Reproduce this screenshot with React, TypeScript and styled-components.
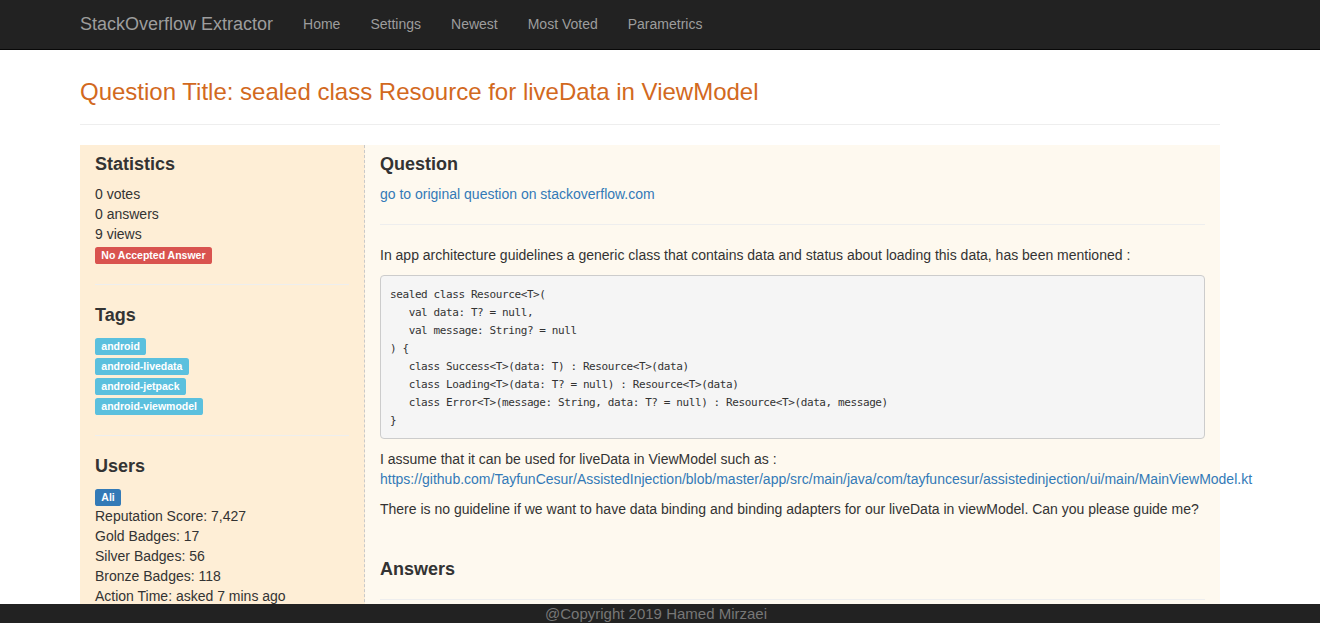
import React from 'react';
import styled, { createGlobalStyle } from 'styled-components';

const GlobalStyle = createGlobalStyle`
  html, body {
    margin: 0;
    padding: 0;
    background: #fff;
  }
  body {
    font-family: "Liberation Sans", Arial, Helvetica, sans-serif;
    font-size: 14px;
    line-height: 20px;
    color: #333;
  }
  * {
    box-sizing: border-box;
  }
`;

const Navbar = styled.nav`
  height: 50px;
  background-color: #222;
  border-bottom: 1px solid #080808;
`;

const NavInner = styled.div`
  width: 1140px;
  margin-left: 80px;
  display: flex;
  align-items: center;
  height: 48px;
`;

const Brand = styled.a`
  font-size: 18px;
  line-height: 20px;
  color: #9d9d9d;
  text-decoration: none;
  padding-right: 15px;
`;

const NavLink = styled.a`
  font-size: 14px;
  line-height: 20px;
  color: #9d9d9d;
  text-decoration: none;
  padding: 15px;
`;

const Container = styled.div`
  width: 1140px;
  margin-left: 80px;
  padding-bottom: 20px;
`;

const PageHeader = styled.div`
  margin: 20px 0 20px;
  padding-top: 9px;
  padding-bottom: 19px;
  border-bottom: 1px solid #eee;
`;

const Title = styled.h3`
  margin: 0;
  font-size: 24px;
  line-height: 26px;
  font-weight: 400;
  color: #d2691e;
`;

const Row = styled.div`
  display: flex;
  align-items: stretch;
`;

const Sidebar = styled.aside`
  width: 285px;
  flex: none;
  background-color: #feeed6;
  border-right: 1px dashed #c9c9c9;
  padding: 0 15px 0 15px;
  display: flow-root;
`;

const Main = styled.main`
  flex: 1;
  min-width: 0;
  background-color: #fef9ef;
  padding: 0 15px;
  display: flow-root;
`;

const Heading = styled.h4<{ $top?: number }>`
  font-size: 18px;
  line-height: 20px;
  font-weight: 700;
  margin: ${(p) => p.$top ?? 9}px 0 10px;
  color: #333;
`;

const Line = styled.div`
  line-height: 20px;
`;

const Divider = styled.hr`
  margin: 20px 0;
  border: 0;
  border-top: 1px solid #eee;
  height: 0;
`;

const Label = styled.span<{ $color: string }>`
  display: inline;
  padding: 0.2em 0.6em 0.3em;
  font-size: 75%;
  font-weight: 700;
  line-height: 1;
  color: #fff;
  text-align: center;
  white-space: nowrap;
  vertical-align: baseline;
  border-radius: 0.25em;
  background-color: ${(p) => p.$color};
`;

const Link = styled.a`
  color: #337ab7;
  text-decoration: none;
  white-space: nowrap;
`;

const Paragraph = styled.p`
  margin: 0 0 10px;
`;

const Pre = styled.pre`
  margin: 0 0 10px;
  padding: 10px 9px 8px;
  background-color: #f5f5f5;
  border: 1px solid #ccc;
  border-radius: 4px;
  font-family: "DejaVu Sans Mono", "Liberation Mono", monospace;
  font-size: 11px;
  letter-spacing: -0.4px;
  line-height: 18px;
  color: #333;
  white-space: pre;
  overflow: hidden;
`;

const Footer = styled.footer`
  position: fixed;
  left: 0;
  right: 0;
  bottom: 0;
  height: 19px;
  background-color: #222;
  color: #777;
  text-align: center;
  font-size: 15px;
  line-height: 20px;
  padding-right: 8px;
`;

const code = `sealed class Resource<T>(
   val data: T? = null,
   val message: String? = null
) {
   class Success<T>(data: T) : Resource<T>(data)
   class Loading<T>(data: T? = null) : Resource<T>(data)
   class Error<T>(message: String, data: T? = null) : Resource<T>(data, message)
}`;

const tags = ['android', 'android-livedata', 'android-jetpack', 'android-viewmodel'];
const navItems = ['Home', 'Settings', 'Newest', 'Most Voted', 'Parametrics'];

export default function App() {
  return (
    <>
      <GlobalStyle />
      <Navbar>
        <NavInner>
          <Brand href="#">StackOverflow Extractor</Brand>
          {navItems.map((item) => (
            <NavLink key={item} href="#">
              {item}
            </NavLink>
          ))}
        </NavInner>
      </Navbar>

      <Container>
        <PageHeader>
          <Title>Question Title: sealed class Resource for liveData in ViewModel</Title>
        </PageHeader>

        <Row>
          <Sidebar>
            <Heading>Statistics</Heading>
            <Line>0 votes</Line>
            <Line>0 answers</Line>
            <Line>9 views</Line>
            <Line>
              <Label $color="#d9534f">No Accepted Answer</Label>
            </Line>
            <Divider />

            <Heading $top={20}>Tags</Heading>
            {tags.map((t) => (
              <Line key={t}>
                <Label $color="#5bc0de">{t}</Label>
              </Line>
            ))}
            <Divider />

            <Heading $top={20}>Users</Heading>
            <Line>
              <Label $color="#337ab7">Ali</Label>
            </Line>
            <Line>Reputation Score: 7,427</Line>
            <Line>Gold Badges: 17</Line>
            <Line>Silver Badges: 56</Line>
            <Line>Bronze Badges: 118</Line>
            <Line>Action Time: asked 7 mins ago</Line>
            <Divider />
          </Sidebar>

          <Main>
            <Heading>Question</Heading>
            <Line>
              <Link href="#">go to original question on stackoverflow.com</Link>
            </Line>
            <Divider />
            <Paragraph>
              In app architecture guidelines a generic class that contains data and status about
              loading this data, has been mentioned :
            </Paragraph>
            <Pre>{code}</Pre>
            <Paragraph>
              I assume that it can be used for liveData in ViewModel such as :
              <br />
              <Link href="#">
                https://github.com/TayfunCesur/AssistedInjection/blob/master/app/src/main/java/com/tayfuncesur/assistedinjection/ui/main/MainViewModel.kt
              </Link>
            </Paragraph>
            <Paragraph>
              There is no guideline if we want to have data binding and binding adapters for our
              liveData in viewModel. Can you please guide me?
            </Paragraph>
            <Heading $top={40}>Answers</Heading>
            <Divider />
          </Main>
        </Row>
      </Container>

      <Footer>@Copyright 2019 Hamed Mirzaei</Footer>
    </>
  );
}
